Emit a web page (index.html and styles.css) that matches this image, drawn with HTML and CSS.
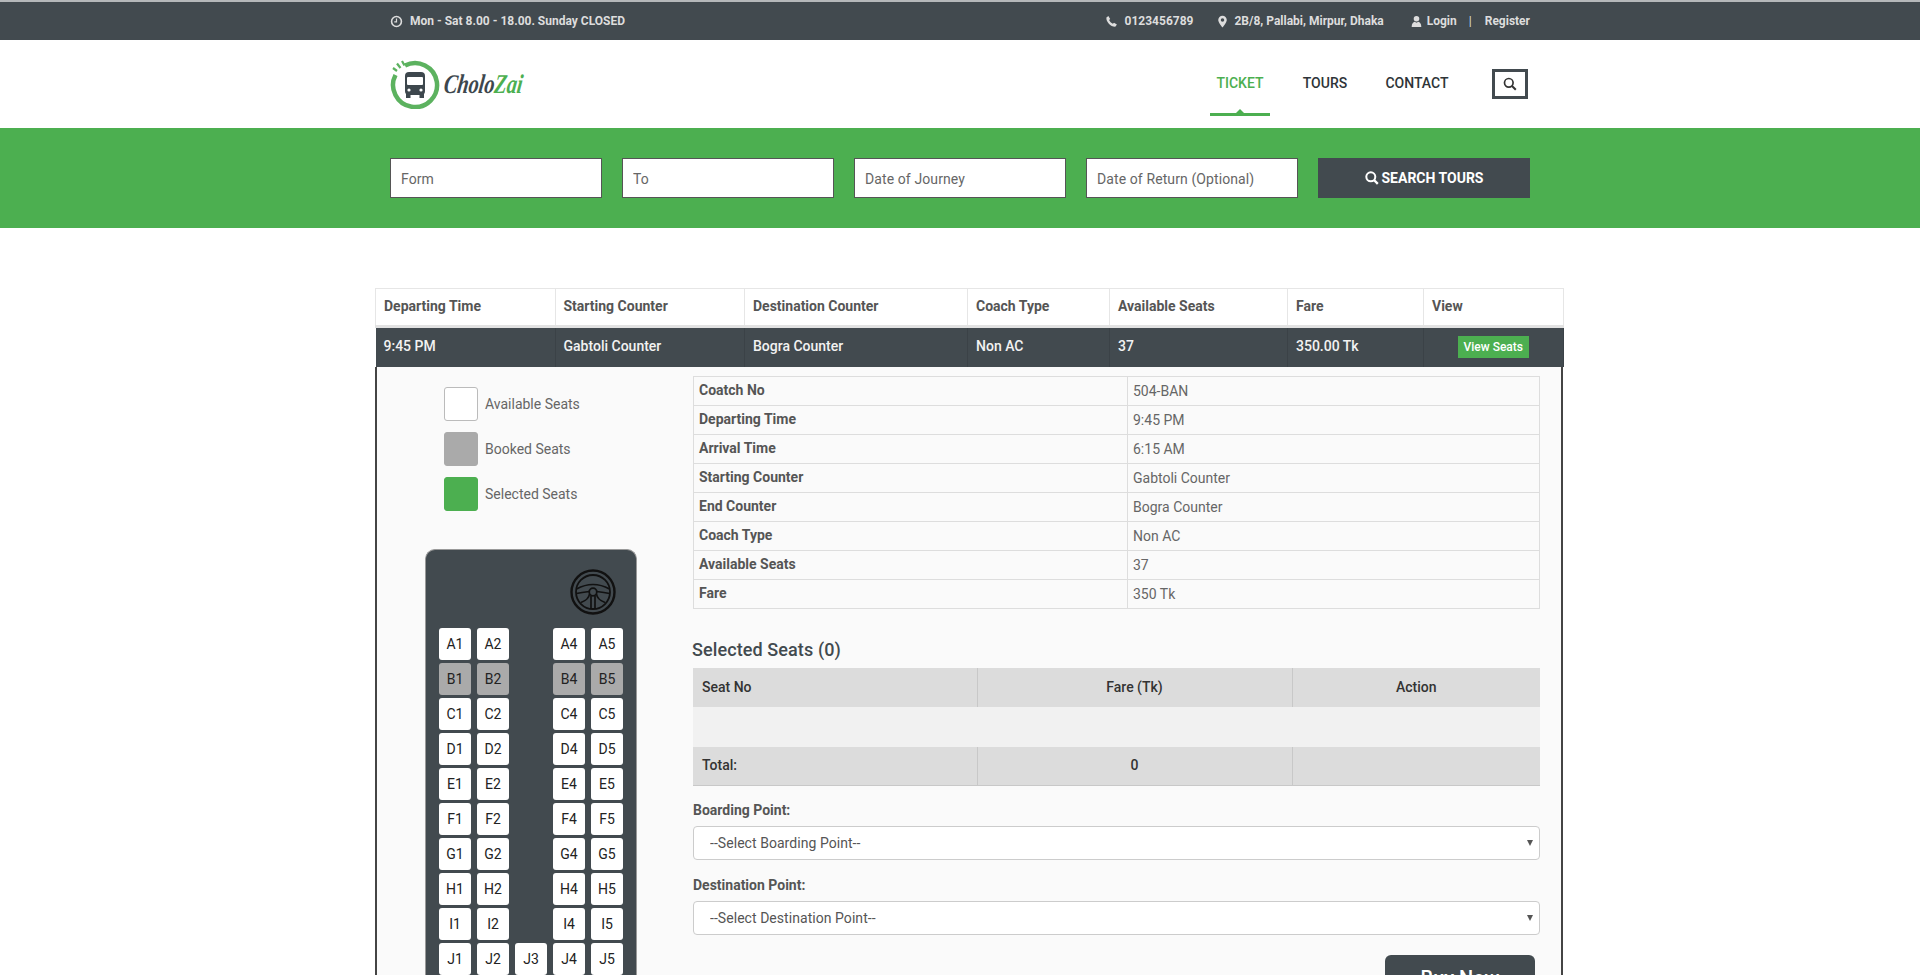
FILE: index.html
```html
<!DOCTYPE html>
<html lang="en">
<head>
  <meta charset="UTF-8">
  <title>CholoZai - Ticket</title>
  <link rel="stylesheet" href="styles.css">
</head>
<body>
<div class="page">

  <div class="topbar">
    <div class="container topbar-row">
      <div class="top-item">
        <svg class="ti" viewBox="0 0 14 14"><circle cx="7" cy="7" r="5.3" fill="none" stroke="currentColor" stroke-width="1.7"/><path d="M7 3.8V7.4H4.6" fill="none" stroke="currentColor" stroke-width="1.3"/></svg>
        Mon - Sat 8.00 - 18.00. Sunday CLOSED
      </div>
      <div class="top-right">
        <div class="top-item">
          <svg class="ti" viewBox="0 0 14 14"><path d="M1.5 2.6 3.6 1.2 5.6 4.2 4.4 5.4C5 6.900 6.700 8.700 8.500 9.500L9.700 8.300 12.800 10.300 11.400 12.500C6.500 13 1 7.500 1.500 2.600Z" fill="currentColor"/></svg>
          0123456789
        </div>
        <div class="top-item pin">
          <svg class="ti" viewBox="0 0 14 14"><path fill-rule="evenodd" d="M7 .8A4.600 4.600 0 0 0 2.400 5.400C2.400 8.300 7 13.400 7 13.400S11.600 8.300 11.600 5.400A4.600 4.600 0 0 0 7 .8ZM7 3.500A1.900 1.900 0 1 1 7 7.300 1.900 1.900 0 0 1 7 3.500Z" fill="currentColor"/></svg>
          2B/8, Pallabi, Mirpur, Dhaka
        </div>
        <div class="top-item login">
          <svg class="ti" viewBox="0 0 14 14"><circle cx="7" cy="4" r="3" fill="currentColor"/><path d="M1.800 12.800C1.800 9.500 3.500 7.500 5 7.300L7 8.300 9 7.300C10.500 7.500 12.200 9.500 12.200 12.800Z" fill="currentColor"/></svg>
          Login <span class="sep">|</span> Register
        </div>
      </div>
    </div>
  </div>

  <header class="site-header">
    <div class="container header-row">
      <a class="logo" href="#">
        <svg class="logo-mark" viewBox="0 0 50 50">
          <path d="M15 6.500A22 22 0 1 1 5.500 16" fill="none" stroke="#5cb25f" stroke-width="4.500"/>
          <path d="M3 9 7 12M7 4.500 10.500 9M12 2 14.500 6.500" stroke="#5cb25f" stroke-width="2.200" fill="none"/>
          <rect x="15" y="13" width="20" height="23" rx="4" fill="#3d474d"/>
          <rect x="17" y="18" width="16" height="8" rx="1" fill="#fff"/>
          <rect x="16" y="35" width="4.500" height="4" fill="#3d474d"/>
          <rect x="29.500" y="35" width="4.500" height="4" fill="#3d474d"/>
          <circle cx="19" cy="31" r="1.600" fill="#fff"/>
          <circle cx="31" cy="31" r="1.600" fill="#fff"/>
        </svg>
        <span class="logo-text">Cholo<em>Zai</em></span>
      </a>
      <nav class="main-nav">
        <a class="active" href="#">TICKET</a>
        <a href="#">TOURS</a>
        <a href="#">CONTACT</a>
        <button class="search-toggle" type="button">
          <svg viewBox="0 0 14 14" width="14" height="14"><circle cx="5.800" cy="5.800" r="4.300" fill="none" stroke="#333" stroke-width="1.700"/><path d="M9 9 12.800 12.800" stroke="#333" stroke-width="2"/></svg>
        </button>
      </nav>
    </div>
  </header>

  <section class="search-band">
    <form class="container search-form">
      <input type="text" placeholder="Form">
      <input type="text" placeholder="To">
      <input type="text" placeholder="Date of Journey">
      <input type="text" placeholder="Date of Return (Optional)">
      <button type="button">
        <svg viewBox="0 0 14 14" width="14" height="14"><circle cx="5.800" cy="5.800" r="4.500" fill="none" stroke="#fff" stroke-width="2"/><path d="M9 9 12.800 12.800" stroke="#fff" stroke-width="2.400"/></svg>
        SEARCH TOURS
      </button>
    </form>
  </section>

  <main class="results">
    <table class="trip-table">
      <colgroup>
        <col class="c1"><col class="c2"><col class="c3"><col class="c4"><col class="c5"><col class="c6"><col class="c7">
      </colgroup>
      <thead>
        <tr>
          <th>Departing Time</th>
          <th>Starting Counter</th>
          <th>Destination Counter</th>
          <th>Coach Type</th>
          <th>Available Seats</th>
          <th>Fare</th>
          <th>View</th>
        </tr>
      </thead>
      <tbody>
        <tr>
          <td>9:45 PM</td>
          <td>Gabtoli Counter</td>
          <td>Bogra Counter</td>
          <td>Non AC</td>
          <td>37</td>
          <td>350.00 Tk</td>
          <td class="view-cell"><a class="view-btn" href="#">View Seats</a></td>
        </tr>
      </tbody>
    </table>

    <div class="seat-panel">
      <div class="seat-side">
        <ul class="legend">
          <li><span class="swatch"></span>Available Seats</li>
          <li><span class="swatch booked"></span>Booked Seats</li>
          <li><span class="swatch selected"></span>Selected Seats</li>
        </ul>

        <div class="bus">
          <div class="bus-front">
            <svg class="wheel" viewBox="0 0 46 46">
              <circle cx="23" cy="23" r="21.500" fill="none" stroke="#111" stroke-width="2.400"/>
              <circle cx="23" cy="23" r="17" fill="none" stroke="#111" stroke-width="1.800"/>
              <circle cx="23" cy="23" r="3.800" fill="none" stroke="#111" stroke-width="1.800"/>
              <path d="M6.500 20C12 17 17 15.500 23 15.500S34 17 39.500 20M6.500 24.500C11 23.500 15 23 19.300 22.500M39.500 24.500C35 23.500 31 23 26.700 22.500M21 26.500V39.500M25 26.500V39.500M19.500 25C19 29 16.500 31.500 11 33.500M26.500 25C27 29 29.500 31.500 35 33.500" fill="none" stroke="#111" stroke-width="1.700"/>
            </svg>
          </div>
          <div class="seats">
            <span>A1</span><span>A2</span><i></i><span>A4</span><span>A5</span>
            <span class="booked">B1</span><span class="booked">B2</span><i></i><span class="booked">B4</span><span class="booked">B5</span>
            <span>C1</span><span>C2</span><i></i><span>C4</span><span>C5</span>
            <span>D1</span><span>D2</span><i></i><span>D4</span><span>D5</span>
            <span>E1</span><span>E2</span><i></i><span>E4</span><span>E5</span>
            <span>F1</span><span>F2</span><i></i><span>F4</span><span>F5</span>
            <span>G1</span><span>G2</span><i></i><span>G4</span><span>G5</span>
            <span>H1</span><span>H2</span><i></i><span>H4</span><span>H5</span>
            <span>I1</span><span>I2</span><i></i><span>I4</span><span>I5</span>
            <span>J1</span><span>J2</span><span>J3</span><span>J4</span><span>J5</span>
          </div>
        </div>
      </div>

      <div class="seat-info">
        <table class="coach-table">
          <tr><th>Coatch No</th><td>504-BAN</td></tr>
          <tr><th>Departing Time</th><td>9:45 PM</td></tr>
          <tr><th>Arrival Time</th><td>6:15 AM</td></tr>
          <tr><th>Starting Counter</th><td>Gabtoli Counter</td></tr>
          <tr><th>End Counter</th><td>Bogra Counter</td></tr>
          <tr><th>Coach Type</th><td>Non AC</td></tr>
          <tr><th>Available Seats</th><td>37</td></tr>
          <tr><th>Fare</th><td>350 Tk</td></tr>
        </table>

        <h3 class="selected-title">Selected Seats (0)</h3>
        <table class="selected-table">
          <colgroup><col class="s1"><col class="s2"><col class="s3"></colgroup>
          <thead>
            <tr><th class="left">Seat No</th><th>Fare (Tk)</th><th>Action</th></tr>
          </thead>
          <tbody>
            <tr class="empty"><td colspan="3"></td></tr>
          </tbody>
          <tfoot>
            <tr><th class="left">Total:</th><th>0</th><th></th></tr>
          </tfoot>
        </table>

        <label class="field-label" for="boarding">Boarding Point:</label>
        <div class="select-wrap">
          <select id="boarding" class="point-select"><option>--Select Boarding Point--</option></select>
        </div>

        <label class="field-label" for="destination">Destination Point:</label>
        <div class="select-wrap">
          <select id="destination" class="point-select"><option>--Select Destination Point--</option></select>
        </div>

        <div class="buy-row">
          <button class="buy-btn" type="button">Buy Now</button>
        </div>
      </div>
    </div>
  </main>

</div>
</body>
</html>
```

FILE: styles.css
```css
* {
  box-sizing: border-box;
}

html, body {
  margin: 0;
  padding: 0;
}

body {
  font-family: Roboto, "Liberation Sans", sans-serif;
  font-size: 14px;
  color: #555;
  background-color: #fff;
}

.page {
  height: 975px;
  overflow: hidden;
}

.container {
  width: 1140px;
  margin: 0 auto;
}

/* top bar */
.topbar {
  height: 40px;
  background-color: #424a4f;
  border-top: 2px solid #b5b8ba;
  color: #ddd;
  font-size: 12px;
  font-weight: 700;
}

.topbar-row {
  height: 38px;
  display: flex;
  justify-content: space-between;
  align-items: center;
}

.top-right {
  display: flex;
  gap: 25px;
}

.top-item {
  display: flex;
  align-items: center;
}

.ti {
  width: 13px;
  height: 13px;
  margin-right: 7px;
}

.pin {
  margin-left: -2px;
}

.pin .ti {
  margin-right: 5px;
}

.login {
  margin-left: 1px;
}

.login .ti {
  margin-right: 4px;
}

.sep {
  margin: 0 13px 0 12px;
  font-weight: 400;
}

/* header */
.site-header {
  height: 88px;
  background-color: #fff;
}

.header-row {
  height: 88px;
  display: flex;
  justify-content: space-between;
  align-items: center;
}

.logo {
  display: flex;
  align-items: center;
  text-decoration: none;
}

.logo-mark {
  width: 50px;
  height: 50px;
}

.logo-text {
  margin-left: 4px;
  font-family: "Liberation Serif", serif;
  font-style: italic;
  font-weight: 700;
  font-size: 27px;
  color: #3d474d;
  transform: scaleX(.75) skewX(-10deg);
  transform-origin: left center;
}

.logo-text em {
  color: #4caf50;
}

.main-nav {
  display: flex;
  align-items: flex-start;
  height: 88px;
  position: relative;
}

.main-nav a {
  position: relative;
  width: 60px;
  margin-left: 35px;
  height: 76px;
  padding-top: 35px;
  text-align: center;
  white-space: nowrap;
  font-size: 14px;
  font-weight: 500;
  color: #2e3438;
  text-decoration: none;
  display: flex;
  justify-content: center;
}

.main-nav a:nth-child(2) {
  width: 46px;
  margin-left: 32px;
}

.main-nav a:nth-child(3) {
  width: 64px;
  margin-left: 37px;
}

.main-nav a.active {
  color: #4caf50;
  margin-left: 0;
  border-bottom: 3px solid #4caf50;
}

.main-nav a.active::after {
  content: "";
  position: absolute;
  left: 50%;
  bottom: 0;
  margin-left: -4px;
  border: 4px solid transparent;
  border-top: 0;
  border-bottom-color: #4caf50;
}

.search-toggle {
  width: 36px;
  height: 30px;
  margin: 29px 2px 0 43px;
  padding: 0;
  background: #fff;
  border: 3px solid #424a4f;
  display: flex;
  align-items: center;
  justify-content: center;
}

/* search band */
.search-band {
  height: 100px;
  padding-top: 30px;
  background-color: #4caf50;
}

.search-form {
  display: grid;
  grid-template-columns: repeat(5, 212px);
  gap: 20px;
}

.search-form input {
  height: 40px;
  padding: 2px 10px 0;
  border: 1px solid #555;
  background: #fff;
  font-family: Roboto, sans-serif;
  font-size: 14px;
  letter-spacing: .1px;
}

.search-form input::placeholder {
  color: #666;
  opacity: 1;
}

.search-form button {
  height: 40px;
  border: none;
  background-color: #424a4f;
  color: #fff;
  font-family: Roboto, sans-serif;
  font-size: 14px;
  font-weight: 700;
  display: flex;
  align-items: center;
  justify-content: center;
  gap: 3px;
}

/* results */
.results {
  width: 1188px;
  margin: 60px 0 0 375px;
}

.trip-table {
  width: 100%;
  table-layout: fixed;
  border-collapse: collapse;
}

.c1 { width: 179.5px; }
.c2 { width: 189.5px; }
.c3 { width: 223px; }
.c4 { width: 142px; }
.c5 { width: 178px; }
.c6 { width: 136px; }
.c7 { width: 140px; }

.trip-table th {
  height: 38px;
  padding: 0 8px 3px;
  text-align: left;
  font-weight: 700;
  color: #555;
  border: 1px solid #e6e6e6;
  border-bottom: 3px solid #e2e2e2;
}

.trip-table td {
  height: 40px;
  padding: 0 8px 3px;
  background-color: #424a4f;
  color: #f2f2f2;
  font-weight: 500;
  border-right: 1px solid #3b4247;
}

.view-cell {
  text-align: right;
}

.view-btn {
  display: inline-block;
  margin: 3px 26px 0 0;
  padding: 0 6px;
  height: 22px;
  line-height: 22px;
  background-color: #4caf50;
  color: #fff;
  font-size: 12px;
  text-decoration: none;
  vertical-align: middle;
}

.seat-panel {
  display: flex;
  height: 620px;
  background-color: #fafafa;
  border-left: 2px solid #444;
  border-right: 2px solid #444;
}

.seat-side {
  width: 316px;
  padding: 21px 0 0 67px;
}

.legend {
  list-style: none;
  margin: 0;
  padding: 0;
}

.legend li {
  display: flex;
  align-items: center;
  height: 34px;
  margin-bottom: 11px;
  padding-bottom: 1px;
  color: #666;
}

.swatch {
  width: 34px;
  height: 34px;
  margin-right: 7px;
  border: 1px solid #bbb;
  border-radius: 3px;
  background: #fff;
}

.swatch.booked {
  background: #aaa;
  border-color: #aaa;
}

.swatch.selected {
  background: #4caf50;
  border-color: #4caf50;
}

.bus {
  width: 212px;
  margin: 37px 0 0 -19px;
  padding: 19px 14px 0 13px;
  background-color: #424a4f;
  border: 1px solid #999;
  border-bottom: 0;
  border-radius: 10px 10px 0 0;
}

.bus-front {
  display: flex;
  justify-content: flex-end;
  height: 59px;
  padding-right: 6px;
}

.wheel {
  width: 46px;
  height: 46px;
}

.seats {
  display: grid;
  grid-template-columns: repeat(5, 32px);
  grid-auto-rows: 32px;
  gap: 3px 6px;
}

.seats span {
  display: flex;
  align-items: center;
  justify-content: center;
  background: #fff;
  border-radius: 3px;
  color: #222;
  font-size: 14px;
}

.seats span.booked {
  background: #aaa;
}

.seat-info {
  width: 847px;
  padding-top: 9px;
}

.coach-table {
  width: 100%;
  table-layout: fixed;
  border-collapse: collapse;
}

.coach-table th,
.coach-table td {
  height: 29px;
  padding: 0 5px;
  border: 1px solid #ddd;
  text-align: left;
}

.coach-table th {
  width: 434px;
  padding-bottom: 2px;
  font-weight: 700;
  color: #555;
}

.coach-table td {
  color: #666;
}

.selected-title {
  margin: 30px 0 8px -1px;
  font-size: 18px;
  line-height: 21px;
  font-weight: 500;
  letter-spacing: .1px;
  color: #424a4f;
}

.selected-table {
  width: 100%;
  table-layout: fixed;
  border-collapse: collapse;
  color: #333;
}

.s1 { width: 284px; }
.s2 { width: 315px; }

.selected-table th {
  height: 39px;
  padding-bottom: 2px;
  background-color: #dcdcdc;
  font-weight: 500;
  text-align: center;
  border-right: 1px solid #c8c8c8;
}

.selected-table th:last-child {
  border-right: 0;
}

.selected-table th.left {
  text-align: left;
  padding-left: 9px;
}

.selected-table .empty td {
  height: 40px;
  background-color: #f1f1f1;
}

.selected-table tfoot th {
  border-bottom: 1px solid #c8c8c8;
}

.field-label {
  display: block;
  margin-top: 17px;
  font-weight: 700;
  line-height: 17px;
  color: #555;
}

.selected-table + .field-label {
  margin-top: 16px;
}

.select-wrap {
  position: relative;
  margin-top: 7px;
}

/* small arrow instead of the browser one */
.select-wrap::after {
  content: "";
  position: absolute;
  right: 7px;
  top: 14px;
  border-left: 3px solid transparent;
  border-right: 3px solid transparent;
  border-top: 6px solid #555;
}

.point-select {
  display: block;
  width: 100%;
  height: 34px;
  padding: 0 16px;
  appearance: none;
  background-color: #fff;
  border: 1px solid #ccc;
  border-radius: 4px;
  font-family: Roboto, sans-serif;
  font-size: 14px;
  letter-spacing: .05px;
  color: #555;
}

.buy-row {
  display: flex;
  justify-content: flex-end;
  padding-right: 5px;
  margin-top: 20px;
}

.buy-btn {
  width: 150px;
  height: 46px;
  border: none;
  border-radius: 6px;
  background-color: #424a4f;
  color: #fff;
  font-family: Roboto, sans-serif;
  font-size: 20px;
  font-weight: 500;
}
```
